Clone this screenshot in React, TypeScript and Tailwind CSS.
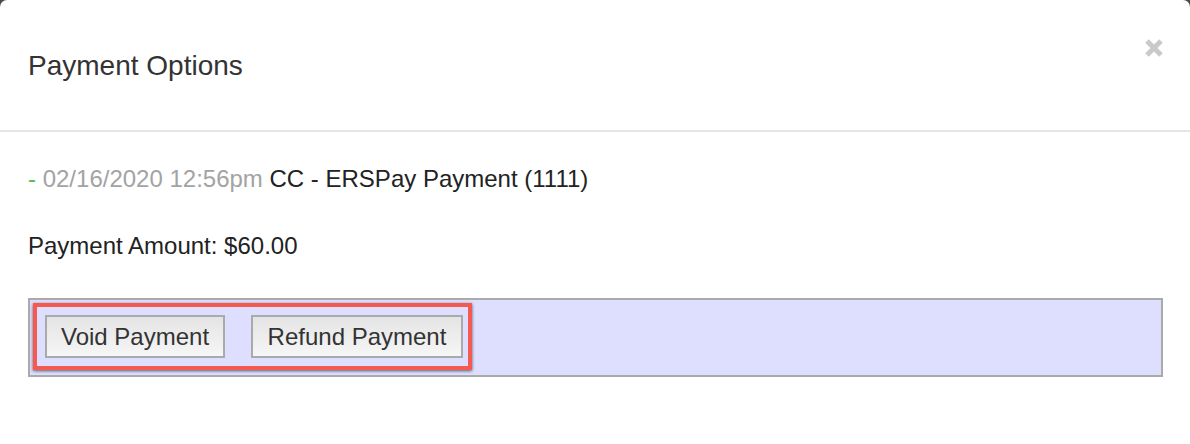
import React from "react";

export default function App() {
  return (
    <div className="w-[1190px] h-[444px] bg-[#4a4a4a] overflow-hidden" style={{ fontFamily: '"Liberation Sans", Arial, sans-serif' }}>
      <div className="w-full h-full bg-white rounded-t-[7px]">
        <div className="h-[132px] border-b-2 border-[#e5e5e5] flex items-start justify-between pl-[28px] pr-[26px] pt-[50px]">
          <h4 className="text-[28px] leading-[31px] text-[#333333]">Payment Options</h4>
          <button className="mt-[-12px] w-[20px] h-[20px]" aria-label="close">
            <svg width="20" height="20" viewBox="0 0 20 20">
              <path d="M3 3 L17 17 M17 3 L3 17" stroke="#c9c9c9" strokeWidth="5" strokeLinecap="butt" />
            </svg>
          </button>
        </div>
        <div className="pl-[28px] pr-[27px]">
          <div className="mt-[30px] text-[24px] leading-[34px] text-[#222222]">
            <span className="text-[#5cb85c]">-</span>{" "}
            <span className="text-[#a3a3a3]">02/16/2020 12:56pm</span> CC - ERSPay Payment (1111)
          </div>
          <div className="mt-[33px] text-[24px] leading-[34px] text-[#222222]">Payment Amount: $60.00</div>
          <div className="mt-[35px] h-[79px] border-2 border-[#aaaaaa] bg-[#dedeff] pt-[3px] pl-[3px]">
            <div className="inline-flex items-center gap-[26px] border-[4px] border-[#f45a4f] pl-[8px] pr-[5px] py-[8px] shadow-[0_1px_3px_rgba(0,0,0,0.6)]">
              <button className="h-[43px] w-[180px] border-2 border-[#aaaaaa] bg-gradient-to-b from-[#e4e4e4] to-[#f6f6f6] text-[24px] leading-[28px] text-[#333333]">
                Void Payment
              </button>
              <button className="h-[43px] w-[212px] border-2 border-[#aaaaaa] bg-gradient-to-b from-[#e4e4e4] to-[#f6f6f6] text-[24px] leading-[28px] text-[#333333]">
                Refund Payment
              </button>
            </div>
          </div>
        </div>
      </div>
    </div>
  );
}
